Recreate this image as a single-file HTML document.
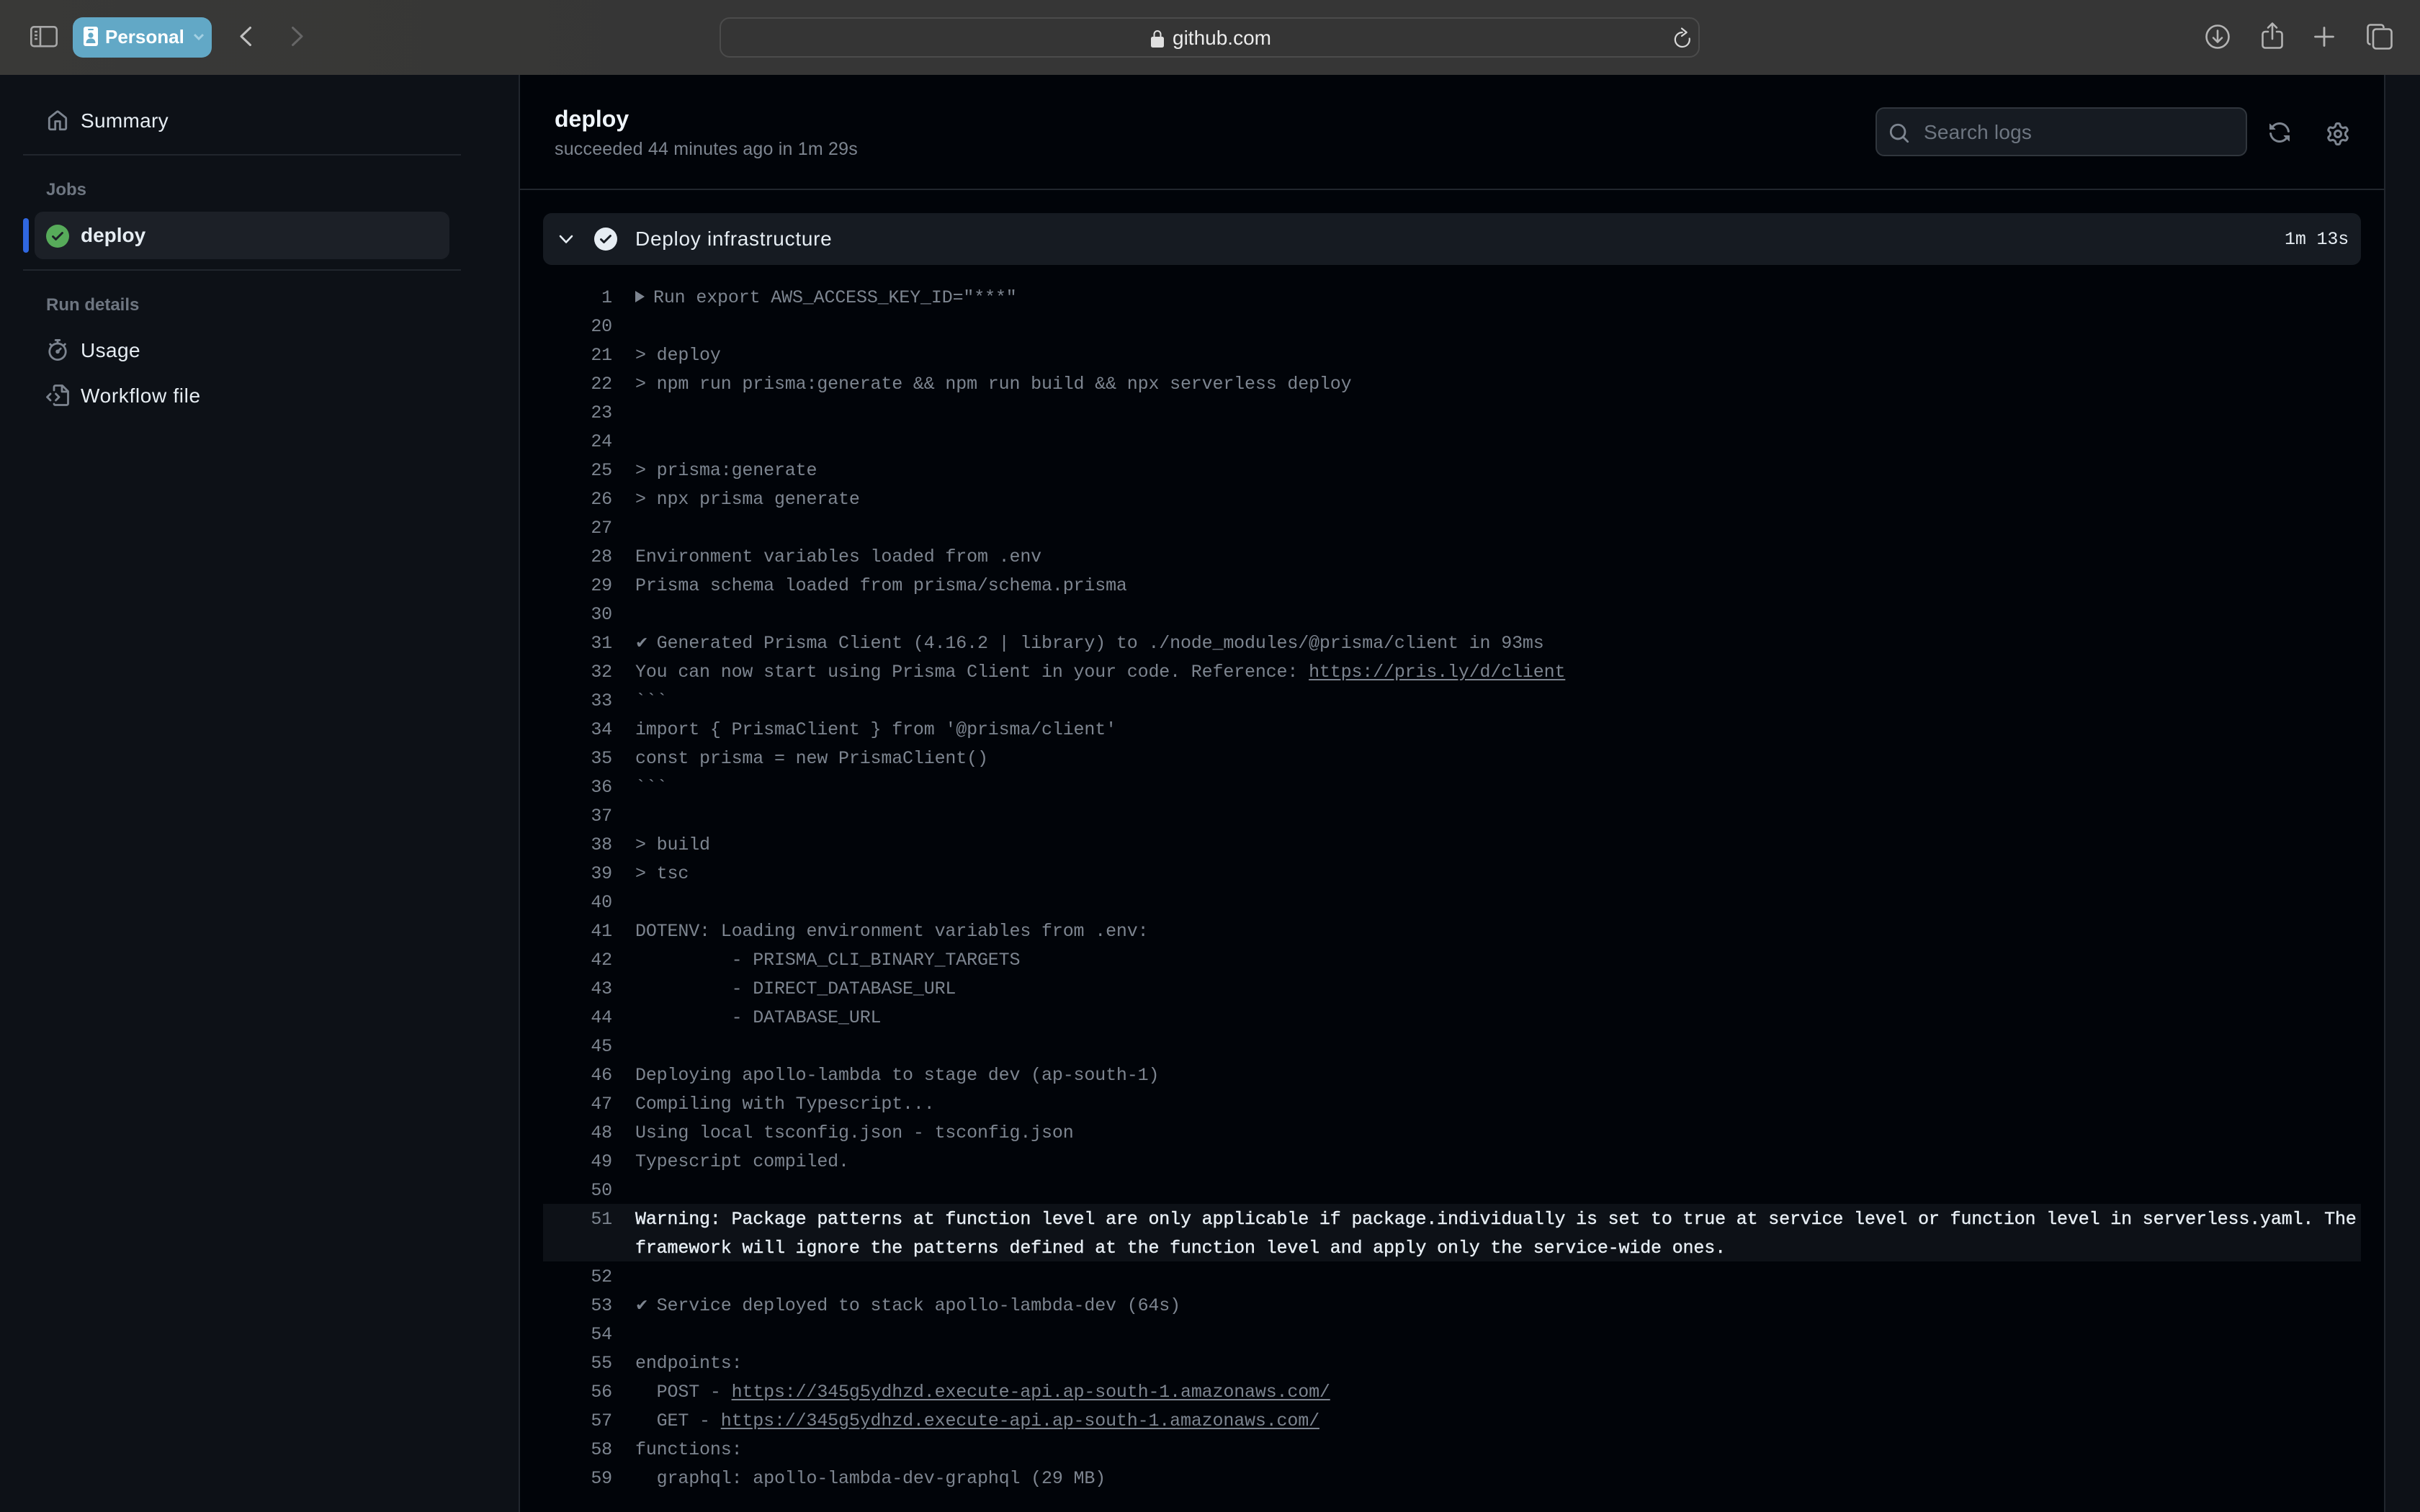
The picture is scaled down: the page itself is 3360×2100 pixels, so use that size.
<!DOCTYPE html>
<html><head><meta charset="utf-8"><style>
*{box-sizing:border-box}
html,body{margin:0;padding:0;width:3360px;height:2100px;overflow:hidden;background:#010409;font-family:"Liberation Sans",sans-serif}
.a{position:absolute}
.t{position:absolute;white-space:pre;line-height:40px;height:40px}
.ln{position:absolute;left:760px;width:90px;text-align:right;font:25px/40px "Liberation Mono",monospace;letter-spacing:-.16px;color:#7d8590;height:40px;margin-top:2px}
.lg{position:absolute;left:882px;font:25px/40px "Liberation Mono",monospace;letter-spacing:-.16px;color:#7d8590;white-space:pre;height:40px;margin-top:2px}
.lg u{text-underline-offset:3px}
.w{color:#e6edf3;-webkit-text-stroke:.4px #e6edf3}
.ck{font-family:"DejaVu Sans",sans-serif;font-size:22px;letter-spacing:0;display:inline-block;width:29.68px;line-height:0}
svg{position:absolute;overflow:visible}
</style></head><body>
<div class="a" style="left:0;top:0;width:3360px;height:104px;background:linear-gradient(90deg,#393937,#363636 30%,#363636)"></div>
<div class="a" style="left:0;top:104px;width:720px;height:1996px;background:#0d1117"></div>
<div class="a" style="left:720px;top:104px;width:2px;height:1996px;background:#21262d"></div>
<div class="a" style="left:3310px;top:104px;width:50px;height:1996px;background:#0d1117;border-left:2px solid #21262d"></div>
<div class="a" style="left:722px;top:262px;width:2588px;height:2px;background:#21262d"></div>

<!-- toolbar -->
<svg style="left:42px;top:36px" width="38" height="30" fill="none" stroke="#a8a8a8" stroke-width="2.6"><rect x="1.3" y="1.3" width="35.4" height="26.9" rx="4"/><path d="M14 1.5V28M6 8h4M6 13h4M6 18h4"/></svg>
<div class="a" style="left:101px;top:24px;width:193px;height:56px;border-radius:14px;background:#62a8c6"></div>
<svg style="left:116px;top:37px" width="20" height="27" viewBox="0 0 20 27"><rect width="20" height="27" rx="3" fill="#fff"/><rect x="6" y="3" width="8" height="2" rx="1" fill="#62a8c6"/><circle cx="10" cy="12" r="3.6" fill="#62a8c6"/><path d="M3.5 23c0-5 3-6.500 6.500-6.500s6.500 1.500 6.500 6.500z" fill="#62a8c6"/></svg>
<div class="t" style="left:146px;top:31px;font-size:26px;font-weight:700;color:#fff">Personal</div>
<svg style="left:269px;top:47px" width="14" height="9" fill="none" stroke="#a3d0e3" stroke-width="3"><path d="M1 1l6 6 6-6"/></svg>
<svg style="left:333px;top:37px" width="16" height="27" fill="none" stroke="#c0c0c0" stroke-width="3" stroke-linecap="round" stroke-linejoin="round"><path d="M14.500 1.500L2 13.500l12.500 12"/></svg>
<svg style="left:405px;top:37px" width="16" height="27" fill="none" stroke="#666" stroke-width="3" stroke-linecap="round" stroke-linejoin="round"><path d="M1.500 1.500L14 13.500l-12.500 12"/></svg>
<div class="a" style="left:999px;top:24px;width:1361px;height:56px;border-radius:14px;border:2px solid #4b4b4b;background:#353535"></div>
<svg style="left:1598px;top:41px" width="18" height="25" viewBox="0 0 18 25"><path d="M4.500 11V6.500a4.500 4.500 0 0 1 9 0V11" fill="none" stroke="#e0e0e0" stroke-width="2"/><rect x="0" y="10" width="18" height="15" rx="2.500" fill="#e0e0e0"/></svg>
<div class="t" style="left:1628px;top:33px;font-size:28px;color:#ececec">github.com</div>
<svg style="left:2325px;top:38px" width="23" height="28" viewBox="0 0 23 28" fill="none" stroke="#d8d8d8" stroke-width="2.200" stroke-linecap="round" stroke-linejoin="round"><path d="M20.700 15.500A10 10 0 1 1 10.700 7M10 1.500L16.700 7 10 12"/></svg>
<svg style="left:3062px;top:34px" width="34" height="34" fill="none" stroke="#b4b4b4" stroke-width="2.600" stroke-linecap="round" stroke-linejoin="round"><circle cx="17" cy="17" r="15.500"/><path d="M17 8.500V24M11 18.500l6 6 6-6"/></svg>
<svg style="left:3140px;top:31px" width="30" height="38" fill="none" stroke="#b4b4b4" stroke-width="2.600" stroke-linecap="round" stroke-linejoin="round"><path d="M9 13H5a3.500 3.500 0 0 0-3.500 3.500V32A3.500 3.500 0 0 0 5 35.500h20a3.500 3.500 0 0 0 3.500-3.500V16.500A3.500 3.500 0 0 0 25 13h-4M15 23V2M9 7.500L15 1.500l6 6"/></svg>
<svg style="left:3213px;top:37px" width="28" height="28" fill="none" stroke="#b4b4b4" stroke-width="2.800" stroke-linecap="round"><path d="M14 1.500v25M1.500 14h25"/></svg>
<svg style="left:3286px;top:33px" width="36" height="36" fill="none" stroke="#b4b4b4" stroke-width="2.600" stroke-linejoin="round"><path d="M5.500 28.500H5a3.500 3.500 0 0 1-3.500-3.500V5A3.500 3.500 0 0 1 5 1.500h15A3.500 3.500 0 0 1 23.500 5v1"/><rect x="9" y="7.500" width="25.500" height="27" rx="4"/></svg>

<!-- sidebar -->
<svg style="left:65px;top:153px" width="30" height="30" viewBox="0 0 16 16" fill="#7d8590"><path d="M6.906.664a1.749 1.749 0 0 1 2.187 0l5.25 4.2c.415.332.657.835.657 1.367v7.019A1.75 1.750 0 0 1 13.250 15h-3.500a.75.75 0 0 1-.75-.75V9H7v5.250a.75.75 0 0 1-.75.75h-3.500A1.750 1.750 0 0 1 1 13.250V6.230c0-.531.242-1.034.657-1.366l5.250-4.200Zm1.250 1.171a.25.25 0 0 0-.312 0l-5.250 4.200a.25.25 0 0 0-.094.196v7.019c0 .138.112.25.25.25H5.500V8.250a.75.75 0 0 1 .75-.75h3.500a.75.75 0 0 1 .75.75v5.250h2.750a.25.25 0 0 0 .25-.25V6.230a.25.25 0 0 0-.094-.195Z"/></svg>
<div class="t" style="left:112px;top:148px;font-size:28px;letter-spacing:.3px;color:#e6edf3">Summary</div>
<div class="a" style="left:32px;top:214px;width:608px;height:2px;background:#21262d"></div>
<div class="t" style="left:64px;top:244px;font-size:24px;font-weight:700;color:#6e7681">Jobs</div>
<div class="a" style="left:32px;top:303px;width:8px;height:48px;border-radius:4px;background:#2f67e0"></div>
<div class="a" style="left:48px;top:294px;width:576px;height:66px;border-radius:12px;background:#1c2027"></div>
<svg style="left:64px;top:312px" width="32" height="32" viewBox="0 0 16 16" fill="#57ab5a"><path d="M8 16A8 8 0 1 1 8 0a8 8 0 0 1 0 16Zm3.780-9.720a.751.751 0 0 0-.018-1.042.751.751 0 0 0-1.042-.018L6.750 9.190 5.280 7.720a.751.751 0 0 0-1.042.018.751.751 0 0 0-.018 1.042l2 2a.75.75 0 0 0 1.060 0Z"/></svg>
<div class="t" style="left:112px;top:307px;font-size:28px;font-weight:700;color:#e6edf3">deploy</div>
<div class="a" style="left:32px;top:374px;width:608px;height:2px;background:#21262d"></div>
<div class="t" style="left:64px;top:404px;font-size:24px;font-weight:700;color:#6e7681">Run details</div>
<svg style="left:65px;top:470px" width="30" height="32" viewBox="0 0 16 16" fill="#7d8590"><path d="M5.750.75A.75.75 0 0 1 6.500 0h3a.75.75 0 0 1 0 1.500h-.75v1l-.001.041a6.724 6.724 0 0 1 3.464 1.435l.007-.006.75-.75a.75.75 0 1 1 1.060 1.060l-.75.75-.006.007a6.750 6.750 0 1 1-10.548 0L2.720 5.030l-.75-.75a.75.75 0 0 1 1.060-1.060l.75.75.007.006A6.720 6.720 0 0 1 7.251 2.540V1.500H6.500a.75.75 0 0 1-.75-.75ZM8 14.500a5.250 5.250 0 1 0-.001-10.501A5.250 5.250 0 0 0 8 14.500Zm.389-6.700 1.330-1.330a.75.75 0 1 1 1.061 1.060L9.450 8.861A1.503 1.503 0 0 1 8 10.750a1.499 1.499 0 1 1 .389-2.950Z"/></svg>
<div class="t" style="left:112px;top:467px;font-size:28px;letter-spacing:.4px;color:#e6edf3">Usage</div>
<svg style="left:64px;top:534px" width="32" height="30" viewBox="0 0 32 30" fill="none" stroke="#7d8590" stroke-width="2.800" stroke-linecap="round" stroke-linejoin="round"><path d="M11 8V3.500A2 2 0 0 1 13 1.500h9.500L30.500 9.500V26.500a2 2 0 0 1-2 2H13a2 2 0 0 1-2-1.500M22 2v8h8M6 13l-4.500 4.500L6 22M13.500 13l4.500 4.500L13.500 22"/></svg>
<div class="t" style="left:112px;top:530px;font-size:28px;letter-spacing:.66px;color:#e6edf3">Workflow file</div>

<!-- header -->
<div class="t" style="left:770px;top:145px;font-size:32px;font-weight:700;color:#f0f6fc">deploy</div>
<div class="t" style="left:770px;top:187px;font-size:25px;letter-spacing:.2px;color:#7d8590">succeeded 44 minutes ago in 1m 29s</div>
<div class="a" style="left:2604px;top:149px;width:516px;height:68px;border-radius:12px;background:#161b22;border:2px solid #30363d"></div>
<svg style="left:2622px;top:170px" width="30" height="30" viewBox="0 0 16 16" fill="#7d8590"><path d="M10.680 11.740a6 6 0 0 1-7.922-8.982 6 6 0 0 1 8.982 7.922l3.040 3.040a.749.749 0 0 1-.326 1.275.749.749 0 0 1-.734-.215ZM11.500 7a4.499 4.499 0 1 0-8.997 0A4.499 4.499 0 0 0 11.500 7Z"/></svg>
<div class="t" style="left:2671px;top:164px;font-size:28px;letter-spacing:.2px;color:#6e7681">Search logs</div>
<svg style="left:3149px;top:168px" width="32" height="32" viewBox="0 0 16 16" fill="#7d8590"><path d="M1.705 8.005a.75.75 0 0 1 .834.656 5.500 5.500 0 0 0 9.592 2.970l-1.204-1.204a.25.25 0 0 1 .177-.427h3.646a.25.25 0 0 1 .25.25v3.646a.25.25 0 0 1-.427.177l-1.380-1.380A7.002 7.002 0 0 1 1.050 8.840a.75.75 0 0 1 .656-.834ZM8 2.500a5.487 5.487 0 0 0-4.131 1.869l1.204 1.204A.25.25 0 0 1 4.896 6H1.250A.25.25 0 0 1 1 5.750V2.104a.25.25 0 0 1 .427-.177l1.380 1.380A7.002 7.002 0 0 1 14.950 7.160a.75.75 0 0 1-1.490.178A5.500 5.500 0 0 0 8 2.500Z"/></svg>
<svg style="left:3230px;top:170px" width="32" height="32" viewBox="0 0 16 16" fill="#7d8590"><path d="M8 0a8.200 8.200 0 0 1 .701.031C9.444.095 9.990.645 10.160 1.290l.288 1.107c.018.066.079.158.212.224.231.114.454.243.668.386.123.082.233.090.299.071l1.103-.303c.644-.176 1.392.021 1.820.630.270.385.506.792.704 1.218.315.675.111 1.422-.364 1.891l-.814.806c-.049.048-.098.147-.088.294.016.257.016.515 0 .772-.010.147.038.246.088.294l.814.806c.475.469.679 1.216.364 1.891a7.977 7.977 0 0 1-.704 1.217c-.428.610-1.176.807-1.820.630l-1.102-.302c-.067-.019-.177-.011-.3.071a5.909 5.909 0 0 1-.668.386c-.133.066-.194.158-.211.224l-.29 1.106c-.168.646-.715 1.196-1.458 1.260a8.006 8.006 0 0 1-1.402 0c-.743-.064-1.289-.614-1.458-1.260l-.289-1.106c-.018-.066-.079-.158-.212-.224a5.738 5.738 0 0 1-.668-.386c-.123-.082-.233-.090-.299-.071l-1.103.303c-.644.176-1.392-.021-1.820-.630a8.120 8.120 0 0 1-.704-1.218c-.315-.675-.111-1.422.363-1.891l.815-.806c.050-.048.098-.147.088-.294a6.214 6.214 0 0 1 0-.772c.010-.147-.038-.246-.088-.294l-.815-.806C.635 6.045.431 5.298.746 4.623a7.920 7.920 0 0 1 .704-1.217c.428-.610 1.176-.807 1.820-.630l1.102.302c.067.019.177.011.3-.071.214-.143.437-.272.668-.386.133-.066.194-.158.211-.224l.29-1.106C6.009.645 6.556.095 7.299.030 7.530.010 7.764 0 8 0Zm-.571 1.525c-.036.003-.108.036-.137.146l-.289 1.105c-.147.561-.549.967-.998 1.189-.173.086-.34.183-.5.29-.417.278-.97.423-1.529.27l-1.103-.303c-.109-.03-.175.016-.195.045-.22.312-.412.644-.573.99-.014.031-.021.11.059.19l.815.806c.411.406.562.957.53 1.456a4.709 4.709 0 0 0 0 .582c.032.499-.119 1.050-.53 1.456l-.815.806c-.081.08-.073.159-.059.19.162.346.353.677.573.989.02.03.085.076.195.046l1.102-.303c.56-.153 1.113-.008 1.530.27.161.107.328.204.501.29.447.222.85.629.997 1.189l.289 1.105c.029.109.101.143.137.146a6.600 6.600 0 0 0 1.142 0c.036-.003.108-.036.137-.146l.289-1.105c.147-.561.549-.967.998-1.189.173-.086.34-.183.5-.29.417-.278.97-.423 1.529-.27l1.103.303c.109.029.175-.016.195-.045.22-.313.411-.644.573-.99.014-.031.021-.11-.059-.19l-.815-.806c-.411-.406-.562-.957-.53-1.456a4.709 4.709 0 0 0 0-.582c-.032-.499.119-1.050.53-1.456l.815-.806c.081-.08.073-.159.059-.19a6.464 6.464 0 0 0-.573-.989c-.02-.03-.085-.076-.195-.046l-1.102.303c-.56.153-1.113.008-1.530-.27a4.440 4.440 0 0 0-.501-.29c-.447-.222-.85-.629-.997-1.189l-.289-1.105c-.029-.11-.101-.143-.137-.146a6.600 6.600 0 0 0-1.142 0ZM11 8a3 3 0 1 1-6 0 3 3 0 0 1 6 0ZM9.500 8a1.500 1.500 0 1 0-3.001.001A1.500 1.500 0 0 0 9.500 8Z"/></svg>

<!-- step -->
<div class="a" style="left:754px;top:296px;width:2524px;height:72px;border-radius:12px;background:#161b22"></div>
<svg style="left:776px;top:326px" width="20" height="13" fill="none" stroke="#e6edf3" stroke-width="2.600" stroke-linecap="round" stroke-linejoin="round"><path d="M2 2l8 8.500L18 2"/></svg>
<svg style="left:825px;top:316px" width="32" height="32" viewBox="0 0 16 16" fill="#e6edf3"><path d="M8 16A8 8 0 1 1 8 0a8 8 0 0 1 0 16Zm3.780-9.720a.751.751 0 0 0-.018-1.042.751.751 0 0 0-1.042-.018L6.750 9.190 5.280 7.720a.751.751 0 0 0-1.042.018.751.751 0 0 0-.018 1.042l2 2a.75.75 0 0 0 1.060 0Z"/></svg>
<div class="t" style="left:882px;top:312px;font-size:28px;letter-spacing:.72px;color:#e6edf3">Deploy infrastructure</div>
<div class="t" style="left:3172px;top:313px;font:25px/40px 'Liberation Mono',monospace;letter-spacing:-.16px;color:#e6edf3">1m 13s</div>

<!-- log -->
<div class="a" style="left:754px;top:1672px;width:2524px;height:80px;background:#0d1117"></div>
<div class="ln" style="top:392px">1</div><svg style="left:882px;top:404px" width="14" height="16"><path d="M0 0l13 8-13 8z" fill="#7d8590"/></svg><div class="lg" style="top:392px;left:907px">Run export AWS_ACCESS_KEY_ID="***"</div>
<div class="ln" style="top:432px">20</div>
<div class="ln" style="top:472px">21</div><div class="lg" style="top:472px">&gt; deploy</div>
<div class="ln" style="top:512px">22</div><div class="lg" style="top:512px">&gt; npm run prisma:generate &amp;&amp; npm run build &amp;&amp; npx serverless deploy</div>
<div class="ln" style="top:552px">23</div>
<div class="ln" style="top:592px">24</div>
<div class="ln" style="top:632px">25</div><div class="lg" style="top:632px">&gt; prisma:generate</div>
<div class="ln" style="top:672px">26</div><div class="lg" style="top:672px">&gt; npx prisma generate</div>
<div class="ln" style="top:712px">27</div>
<div class="ln" style="top:752px">28</div><div class="lg" style="top:752px">Environment variables loaded from .env</div>
<div class="ln" style="top:792px">29</div><div class="lg" style="top:792px">Prisma schema loaded from prisma/schema.prisma</div>
<div class="ln" style="top:832px">30</div>
<div class="ln" style="top:872px">31</div><div class="lg" style="top:872px"><span class="ck">✔</span>Generated Prisma Client (4.16.2 | library) to ./node_modules/@prisma/client in 93ms</div>
<div class="ln" style="top:912px">32</div><div class="lg" style="top:912px">You can now start using Prisma Client in your code. Reference: <u>https://pris.ly/d/client</u></div>
<div class="ln" style="top:952px">33</div><div class="lg" style="top:952px">&#96;&#96;&#96;</div>
<div class="ln" style="top:992px">34</div><div class="lg" style="top:992px">import { PrismaClient } from '@prisma/client'</div>
<div class="ln" style="top:1032px">35</div><div class="lg" style="top:1032px">const prisma = new PrismaClient()</div>
<div class="ln" style="top:1072px">36</div><div class="lg" style="top:1072px">&#96;&#96;&#96;</div>
<div class="ln" style="top:1112px">37</div>
<div class="ln" style="top:1152px">38</div><div class="lg" style="top:1152px">&gt; build</div>
<div class="ln" style="top:1192px">39</div><div class="lg" style="top:1192px">&gt; tsc</div>
<div class="ln" style="top:1232px">40</div>
<div class="ln" style="top:1272px">41</div><div class="lg" style="top:1272px">DOTENV: Loading environment variables from .env:</div>
<div class="ln" style="top:1312px">42</div><div class="lg" style="top:1312px">         - PRISMA_CLI_BINARY_TARGETS</div>
<div class="ln" style="top:1352px">43</div><div class="lg" style="top:1352px">         - DIRECT_DATABASE_URL</div>
<div class="ln" style="top:1392px">44</div><div class="lg" style="top:1392px">         - DATABASE_URL</div>
<div class="ln" style="top:1432px">45</div>
<div class="ln" style="top:1472px">46</div><div class="lg" style="top:1472px">Deploying apollo-lambda to stage dev (ap-south-1)</div>
<div class="ln" style="top:1512px">47</div><div class="lg" style="top:1512px">Compiling with Typescript...</div>
<div class="ln" style="top:1552px">48</div><div class="lg" style="top:1552px">Using local tsconfig.json - tsconfig.json</div>
<div class="ln" style="top:1592px">49</div><div class="lg" style="top:1592px">Typescript compiled.</div>
<div class="ln" style="top:1632px">50</div>
<div class="ln" style="top:1672px">51</div><div class="lg w" style="top:1672px">Warning: Package patterns at function level are only applicable if package.individually is set to true at service level or function level in serverless.yaml. The</div>
<div class="lg w" style="top:1712px">framework will ignore the patterns defined at the function level and apply only the service-wide ones.</div>
<div class="ln" style="top:1752px">52</div>
<div class="ln" style="top:1792px">53</div><div class="lg" style="top:1792px"><span class="ck">✔</span>Service deployed to stack apollo-lambda-dev (64s)</div>
<div class="ln" style="top:1832px">54</div>
<div class="ln" style="top:1872px">55</div><div class="lg" style="top:1872px">endpoints:</div>
<div class="ln" style="top:1912px">56</div><div class="lg" style="top:1912px">  POST - <u>https://345g5ydhzd.execute-api.ap-south-1.amazonaws.com/</u></div>
<div class="ln" style="top:1952px">57</div><div class="lg" style="top:1952px">  GET - <u>https://345g5ydhzd.execute-api.ap-south-1.amazonaws.com/</u></div>
<div class="ln" style="top:1992px">58</div><div class="lg" style="top:1992px">functions:</div>
<div class="ln" style="top:2032px">59</div><div class="lg" style="top:2032px">  graphql: apollo-lambda-dev-graphql (29 MB)</div>
</body></html>
